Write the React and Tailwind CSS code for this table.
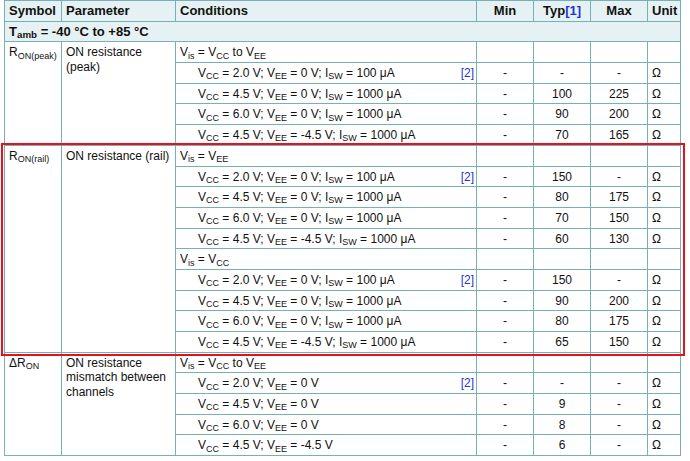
import React from "react";

const sub = (s) => <sub>{s}</sub>;
const V = (s) => <>V{sub(s)}</>;

const cond = (vcc, vee, isw) => (
  <>
    {V("CC")} = {vcc} V; {V("EE")} = {vee} V{isw && <>; I{sub("SW")} = {isw} μA</>}
  </>
);

const groups = [
  {
    symbol: <>R{sub("ON(peak)")}</>,
    param: "ON resistance (peak)",
    span: "row-span-5",
    rows: [
      { head: <>{V("is")} = {V("CC")} to {V("EE")}</> },
      { c: cond("2.0", "0", "100"), note: true, min: "-", typ: "-", max: "-" },
      { c: cond("4.5", "0", "1000"), min: "-", typ: "100", max: "225" },
      { c: cond("6.0", "0", "1000"), min: "-", typ: "90", max: "200" },
      { c: cond("4.5", "-4.5", "1000"), min: "-", typ: "70", max: "165" },
    ],
  },
  {
    symbol: <>R{sub("ON(rail)")}</>,
    param: "ON resistance (rail)",
    span: "row-span-10",
    rows: [
      { head: <>{V("is")} = {V("EE")}</> },
      { c: cond("2.0", "0", "100"), note: true, min: "-", typ: "150", max: "-" },
      { c: cond("4.5", "0", "1000"), min: "-", typ: "80", max: "175" },
      { c: cond("6.0", "0", "1000"), min: "-", typ: "70", max: "150" },
      { c: cond("4.5", "-4.5", "1000"), min: "-", typ: "60", max: "130" },
      { head: <>{V("is")} = {V("CC")}</> },
      { c: cond("2.0", "0", "100"), note: true, min: "-", typ: "150", max: "-" },
      { c: cond("4.5", "0", "1000"), min: "-", typ: "90", max: "200" },
      { c: cond("6.0", "0", "1000"), min: "-", typ: "80", max: "175" },
      { c: cond("4.5", "-4.5", "1000"), min: "-", typ: "65", max: "150" },
    ],
  },
  {
    symbol: <>ΔR{sub("ON")}</>,
    param: "ON resistance mismatch between channels",
    span: "row-span-5",
    rows: [
      { head: <>{V("is")} = {V("CC")} to {V("EE")}</> },
      { c: cond("2.0", "0"), note: true, min: "-", typ: "-", max: "-" },
      { c: cond("4.5", "0"), min: "-", typ: "9", max: "-" },
      { c: cond("6.0", "0"), min: "-", typ: "8", max: "-" },
      { c: cond("4.5", "-4.5"), min: "-", typ: "6", max: "-" },
    ],
  },
];

const cell = "border-r border-b border-[#78b0b8] px-[4px] pt-[3px] leading-[14.5px]";
const head = "border-r border-b border-[#78b0b8] bg-[#e5f1f2] px-[4px] pt-[2px] leading-[16px] font-bold text-[13px]";

export default function App() {
  return (
    <div className="relative w-[690px] h-[461px] bg-white text-[#111] text-[12px] font-['Liberation_Sans',Arial,sans-serif]">
      <div className="ml-[4px] grid grid-cols-[57px_114px_301px_57px_57px_57px_33px] auto-rows-[20.7px] border-l border-t border-[#78b0b8] w-[677px]">
        {/* header */}
        <div className={head}>Symbol</div>
        <div className={head}>Parameter</div>
        <div className={head}>Conditions</div>
        <div className={`${head} text-center`}>Min</div>
        <div className={`${head} text-center`}>
          Typ<span className="text-[#2233dd]">[1]</span>
        </div>
        <div className={`${head} text-center`}>Max</div>
        <div className={head}>Unit</div>

        <div className={`${head} col-span-7`}>
          T<sub>amb</sub> = -40 °C to +85 °C
        </div>

        {groups.map((g, gi) => (
          <React.Fragment key={gi}>
            <div className={`${cell} ${g.span}`}>{g.symbol}</div>
            <div className={`${cell} ${g.span}`}>{g.param}</div>
            {g.rows.map((r, ri) => (
              <React.Fragment key={ri}>
                {r.head ? (
                  <div className={cell}>{r.head}</div>
                ) : (
                  <div className={`${cell} flex justify-between pl-[22px] pr-[2px]`}>
                    <span>{r.c}</span>
                    {r.note && <span className="text-[#2233dd]">[2]</span>}
                  </div>
                )}
                <div className={`${cell} text-center`}>{r.min}</div>
                <div className={`${cell} text-center`}>{r.typ}</div>
                <div className={`${cell} text-center`}>{r.max}</div>
                <div className={cell}>{r.head ? "" : "Ω"}</div>
              </React.Fragment>
            ))}
          </React.Fragment>
        ))}
      </div>

      {/* highlight box */}
      <div className="absolute left-[1px] top-[143px] w-[684px] h-[213px] border-2 border-[#e8101a] pointer-events-none" />
    </div>
  );
}
